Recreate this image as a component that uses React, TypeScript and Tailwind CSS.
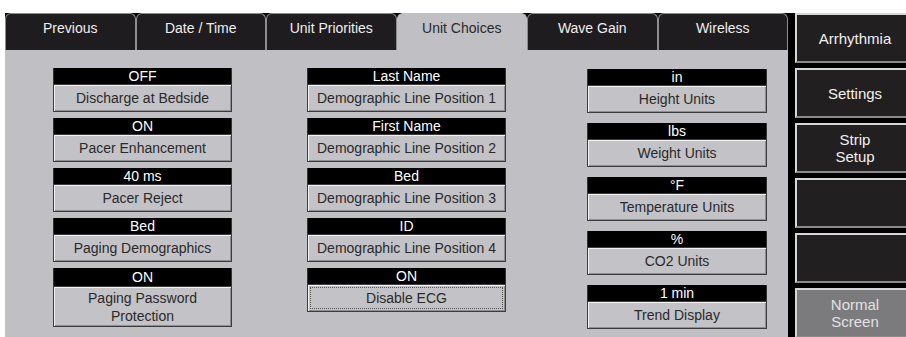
const tabs = ["Previous", "Date / Time", "Unit Priorities", "Unit Choices", "Wave Gain", "Wireless"];

type Item = { value: string; label: string; tall?: boolean; focused?: boolean };

const col1: Item[] = [
  { value: "OFF", label: "Discharge at Bedside" },
  { value: "ON", label: "Pacer Enhancement" },
  { value: "40 ms", label: "Pacer Reject" },
  { value: "Bed", label: "Paging Demographics" },
  { value: "ON", label: "Paging Password Protection", tall: true },
];

const col2: Item[] = [
  { value: "Last Name", label: "Demographic Line Position 1" },
  { value: "First Name", label: "Demographic Line Position 2" },
  { value: "Bed", label: "Demographic Line Position 3" },
  { value: "ID", label: "Demographic Line Position 4" },
  { value: "ON", label: "Disable ECG", focused: true },
];

const col3: Item[] = [
  { value: "in", label: "Height Units" },
  { value: "lbs", label: "Weight Units" },
  { value: "°F", label: "Temperature Units" },
  { value: "%", label: "CO2 Units" },
  { value: "1 min", label: "Trend Display" },
];

function Setting({ item }: { item: Item }) {
  return (
    <div className="flex flex-col">
      <div
        className={`bg-black text-white text-center text-[14px] border-x border-[#333] ${
          item.tall ? "h-[18px] leading-[18px]" : "h-[16px] leading-[16px]"
        }`}
      >
        {item.value}
      </div>
      <div
        className={`relative bg-[#c3c2c6] border border-[#3c3c3e] shadow-[inset_1px_1px_0_#f2f2f2,inset_-1px_-1px_0_#8e8d90] text-[#2a2a2a] text-[14px] text-center flex items-center justify-center ${
          item.tall ? "h-[41px] leading-[18px] px-8" : "h-[28px] leading-[16px]"
        }`}
      >
        {item.focused && (
          <div className="absolute inset-[2px] border border-dotted border-[#555]" />
        )}
        {item.label}
      </div>
    </div>
  );
}

function SideButton({ label, gray }: { label?: string; gray?: boolean }) {
  return (
    <div
      className={`h-[50px] w-[120px] shrink-0 flex items-center justify-center text-center whitespace-pre-line text-[15px] leading-[17px] border-2 border-t-[#d6d6d6] border-l-[#d6d6d6] border-b-[#8a8a8a] border-r-[#8a8a8a] ${
        gray ? "bg-[#7b7a7d] text-[#e2e2e2]" : "bg-[#221f21] text-[#f0f0f0]"
      }`}
    >
      {label}
    </div>
  );
}

export default function App() {
  return (
    <div
      className="w-[906px] h-[337px] bg-white flex overflow-hidden"
      style={{ fontFamily: '"Liberation Sans", Arial, sans-serif' }}
    >
      <div className="w-[788px] shrink-0 pl-[5px] pt-[13px] flex flex-col">
        <div className="h-[37px] bg-black grid grid-cols-6 shrink-0">
          {tabs.map((t) => {
            const active = t === "Unit Choices";
            return (
              <div
                key={t}
                className={`rounded-t-[6px] border-x border-t border-[#8d8d8f] text-center text-[14px] leading-[16px] pt-[6px] ${
                  active ? "bg-[#c0bfc3] text-[#2a2a2a] border-[#c0bfc3]" : "bg-[#1f1c1f] text-[#eeeeee]"
                }`}
              >
                {t}
              </div>
            );
          })}
        </div>
        <div className="flex-1 bg-[#c0bfc3] flex pl-[48px] pt-[18px]">
          <div className="w-[179px] flex flex-col gap-[6px]">
            {col1.map((it, i) => (
              <Setting key={i} item={it} />
            ))}
          </div>
          <div className="w-[199px] ml-[75px] flex flex-col gap-[6px]">
            {col2.map((it, i) => (
              <Setting key={i} item={it} />
            ))}
          </div>
          <div className="w-[180px] ml-[81px] mt-[1px] flex flex-col gap-[10px]">
            {col3.map((it, i) => (
              <Setting key={i} item={it} />
            ))}
          </div>
        </div>
      </div>
      <div className="flex-1 flex flex-col">
        <div className="h-[13px] bg-white shrink-0" />
        <div className="flex-1 bg-black pl-[7px] flex flex-col gap-[5px]">
          <SideButton label="Arrhythmia" />
          <SideButton label="Settings" />
          <SideButton label={"Strip\nSetup"} />
          <SideButton />
          <SideButton />
          <SideButton label={"Normal\nScreen"} gray />
        </div>
      </div>
    </div>
  );
}
